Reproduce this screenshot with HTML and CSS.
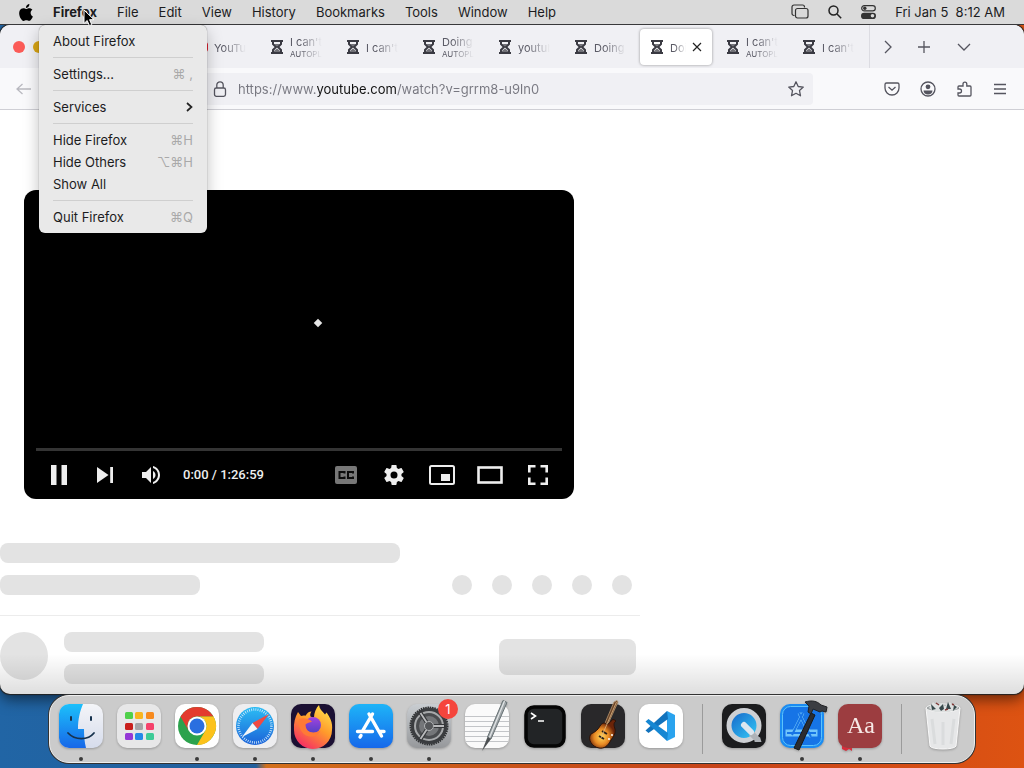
FILE: index.html
```html
<!DOCTYPE html>
<html lang="en">
<head>
    <meta charset="UTF-8">
    <meta name="viewport" content="width=device-width, initial-scale=1">
    <title>Desktop</title>
    <link rel="stylesheet" href="styles.css">
</head>
<body>
    <svg class="defs" aria-hidden="true">
        <symbol id="hourglass" viewBox="0 0 14 16">
            <path d="M1 2h12M1 14h12" stroke="#3a3a42" stroke-width="2.2"/>
            <path d="M3 2v3l3 3-3 3v3M11 2v3L8 8l3 3v3" fill="none" stroke="#3a3a42" stroke-width="2"/>
            <path d="M4.500 5h5L7 7.500zM4 13.500v-1.500l3-2.500 3 2.500v1.500z" fill="#3a3a42" opacity=".7"/>
        </symbol>
    </svg>

    <nav class="menubar">
        <button class="apple" aria-label="Apple"><svg width="14" height="17" viewBox="2 0 20 24"><path d="M12.152 6.896c-.948 0-2.415-1.078-3.96-1.040-2.040.027-3.910 1.183-4.961 3.014-2.117 3.675-.546 9.103 1.519 12.090 1.013 1.454 2.208 3.090 3.792 3.039 1.520-.065 2.090-.987 3.935-.987 1.831 0 2.350.987 3.960.948 1.637-.026 2.676-1.480 3.676-2.948 1.156-1.688 1.636-3.325 1.662-3.415-.039-.013-3.182-1.221-3.220-4.857-.026-3.040 2.480-4.494 2.597-4.559-1.429-2.090-3.623-2.324-4.390-2.376-2-.156-3.675 1.090-4.610 1.090zM15.530 3.830c.843-1.012 1.400-2.427 1.245-3.830-1.207.052-2.662.805-3.532 1.818-.780.896-1.454 2.338-1.273 3.714 1.338.104 2.715-.688 3.559-1.701"/></svg></button>
        <div class="menu-wrap">
            <button class="app-name">Firefox</button>
            <div class="menu">
                <button>About Firefox</button>
                <hr>
                <button>Settings... <kbd>⌘ ,</kbd></button>
                <hr>
                <button>Services <svg width="7" height="10" viewBox="0 0 7 10"><path d="M1 1l4.500 4L1 9" fill="none" stroke="#222" stroke-width="1.700"/></svg></button>
                <hr>
                <button>Hide Firefox <kbd>⌘H</kbd></button>
                <button>Hide Others <kbd>⌥⌘H</kbd></button>
                <button>Show All</button>
                <hr>
                <button>Quit Firefox <kbd>⌘Q</kbd></button>
            </div>
        </div>
        <button>File</button>
        <button>Edit</button>
        <button>View</button>
        <button>History</button>
        <button>Bookmarks</button>
        <button>Tools</button>
        <button>Window</button>
        <button>Help</button>
        <div class="status">
            <button aria-label="Stage manager"><svg width="18" height="16" viewBox="0 0 18 16" fill="none" stroke="#333" stroke-width="1.200"><path d="M3.500 11.500H3a2 2 0 0 1-2-2V3a2 2 0 0 1 2-2h8.500a2 2 0 0 1 2 2v.500"/><rect x="4.500" y="4.500" width="12.500" height="9.500" rx="2"/></svg></button>
            <button aria-label="Search"><svg width="14" height="14" viewBox="0 0 14 14" fill="none" stroke="#222" stroke-width="1.500"><circle cx="5.500" cy="5.500" r="4.500"/><path d="M9 9l4.200 4.200"/></svg></button>
            <button aria-label="Control centre"><svg width="15" height="14" viewBox="0 0 15 14"><rect x=".7" y=".7" width="13.600" height="5.200" rx="2.600" fill="none" stroke="#333" stroke-width="1.200"/><circle cx="3.800" cy="3.300" r="1.700" fill="#333"/><rect y="7.700" width="15" height="6.300" rx="3.100" fill="#333"/><circle cx="11.500" cy="10.800" r="1.800" fill="#dadada"/></svg></button>
            <time>Fri Jan 5&nbsp; 8:12 AM</time>
        </div>
        <svg class="cursor" width="12" height="18" viewBox="0 0 12 18"><path d="M1 1v13.500l3.200-3 2.200 5.200 2.400-1-2.200-5H11z" fill="#000" stroke="#fff"/></svg>
    </nav>

    <main class="window">
        <header class="tabstrip">
            <div class="lights">
                <button class="red" aria-label="Close"></button>
                <button class="yellow" aria-label="Minimize"></button>
                <button class="green" aria-label="Zoom"></button>
            </div>
            <div class="tabs">
                <button class="tab"><svg width="14" height="12" viewBox="0 0 14 12"><rect y="1" width="14" height="10" rx="3" fill="#e02030"/><path d="M5.500 3.500v5l4-2.500z" fill="#fff"/></svg><span>YouTube</span></button>
                <button class="tab"><svg width="14" height="16"><use href="#hourglass"/></svg><span>I can't<small>AUTOPLAY</small></span></button>
                <button class="tab"><svg width="14" height="16"><use href="#hourglass"/></svg><span>I can't</span></button>
                <button class="tab"><svg width="14" height="16"><use href="#hourglass"/></svg><span>Doing<small>AUTOPLAY</small></span></button>
                <button class="tab"><svg width="14" height="16"><use href="#hourglass"/></svg><span>youtube</span></button>
                <button class="tab"><svg width="14" height="16"><use href="#hourglass"/></svg><span>Doing</span></button>
                <button class="tab active"><svg width="14" height="16"><use href="#hourglass"/></svg><span>Doing</span><svg class="x" width="10" height="10" viewBox="0 0 10 10"><path d="M1 1l8 8M9 1L1 9" stroke="#222" stroke-width="1.200"/></svg></button>
                <button class="tab"><svg width="14" height="16"><use href="#hourglass"/></svg><span>I can't<small>AUTOPLAY</small></span></button>
                <button class="tab"><svg width="14" height="16"><use href="#hourglass"/></svg><span>I can't</span></button>
            </div>
            <div class="tab-tools">
                <button aria-label="Scroll tabs"><svg width="8" height="14" viewBox="0 0 8 14"><path d="M1 1l6 6-6 6"/></svg></button>
                <button aria-label="New tab"><svg width="12" height="12" viewBox="0 0 12 12"><path d="M6 0v12M0 6h12"/></svg></button>
                <button aria-label="List tabs"><svg width="14" height="8" viewBox="0 0 14 8"><path d="M1 1l6 6 6-6"/></svg></button>
            </div>
        </header>

        <div class="toolbar">
            <button class="back" aria-label="Back"><svg width="15" height="12" viewBox="0 0 15 12"><path d="M15 6H1M6.500 1L1 6l5.500 5"/></svg></button>
            <label class="urlbar">
                <svg width="14" height="18" viewBox="0 0 14 18"><rect x="1.500" y="8" width="11" height="8.300" rx="1.800"/><path d="M3.800 8V5a3.200 3.200 0 0 1 6.400 0v3"/></svg>
                <input type="text" aria-label="Address" value="https://www.youtube.com/watch?v=grrm8-u9ln0">
                <svg width="18" height="18" viewBox="0 0 18 18"><path d="M9 1.800l2.200 4.700 5.100.6-3.800 3.500 1 5.200L9 13.300l-4.500 2.500 1-5.200L1.700 7.100l5.100-.6z" stroke-linejoin="round"/></svg>
            </label>
            <div class="actions">
                <button aria-label="Pocket"><svg width="16" height="16" viewBox="0 0 16 16"><path d="M2.500 2h11a1.500 1.500 0 0 1 1.500 1.500V7A7 7 0 0 1 1 7V3.500A1.500 1.500 0 0 1 2.500 2zM4.500 6L8 9.200 11.500 6"/></svg></button>
                <button aria-label="Account"><svg width="16" height="16" viewBox="0 0 16 16"><circle cx="8" cy="8" r="7"/><circle cx="8" cy="5.800" r="2.400" fill="#55555f" stroke="none"/><path d="M3.500 9.500h9c0 2.400-2 4-4.500 4s-4.500-1.600-4.500-4z" fill="#55555f" stroke="none"/></svg></button>
                <button aria-label="Extensions"><svg width="16" height="16" viewBox="0 0 16 16"><path d="M2 8V6a1 1 0 0 1 1-1h4V3a1.900 1.900 0 0 1 3.800 0v2H14a1 1 0 0 1 1 1v8a1 1 0 0 1-1 1H3a1 1 0 0 1-1-1v-2h1.500a2 2 0 0 0 0-4z"/></svg></button>
                <button aria-label="Menu"><svg width="12" height="12" viewBox="0 0 12 12"><path d="M0 1.500h12M0 6h12M0 10.500h12"/></svg></button>
            </div>
        </div>

        <section class="watch">
            <div class="player">
                <i class="spinner"></i>
                <div class="progress"></div>
                <div class="controls">
                    <button aria-label="Pause"><svg width="16" height="20" viewBox="0 0 16 20"><path d="M0 0h5.500v20H0zM10.500 0H16v20h-5.500z"/></svg></button>
                    <button aria-label="Next"><svg width="16" height="16" viewBox="0 0 16 16"><path d="M0 0l11.500 8L0 16zM13.200 0H16v16h-2.800z"/></svg></button>
                    <button aria-label="Mute"><svg width="18" height="18" viewBox="0 0 18 18"><path d="M0 6h4l5-5v16l-5-5H0zM11 5c1.700.8 2.500 2.300 2.500 4s-.8 3.200-2.500 4zM11 0c4 .9 7 4.600 7 9s-3 8.100-7 9v-2.100c2.900-.9 5-3.600 5-6.900s-2.100-6-5-6.900z"/></svg></button>
                    <span class="time">0:00 / 1:26:59</span>
                    <button aria-label="Captions"><svg width="22" height="18" viewBox="0 0 22 18"><rect width="22" height="18" rx="2" fill="#777"/><path d="M9.500 7.500V6h-5v6h5v-1.500M18 7.500V6h-5v6h5v-1.500" fill="none" stroke="#0c0c0c" stroke-width="2"/></svg></button>
                    <button aria-label="Settings"><svg width="20" height="20" viewBox="2 2 20 20"><path d="M19.430 12.980c.040-.320.070-.640.070-.980s-.030-.660-.070-.980l2.110-1.650c.190-.150.240-.420.120-.640l-2-3.460c-.120-.220-.390-.300-.610-.220l-2.490 1c-.520-.400-1.080-.730-1.690-.980l-.380-2.650C14.460 2.180 14.250 2 14 2h-4c-.250 0-.460.180-.490.420l-.380 2.650c-.610.250-1.170.590-1.690.980l-2.490-1c-.230-.090-.490 0-.610.220l-2 3.460c-.130.220-.070.490.120.640l2.110 1.650c-.040.320-.070.650-.070.980s.030.660.070.980l-2.110 1.650c-.190.150-.240.420-.120.640l2 3.460c.120.220.390.300.610.220l2.490-1c.520.400 1.080.730 1.690.980l.380 2.650c.030.240.240.420.490.420h4c.250 0 .460-.180.490-.420l.380-2.650c.610-.250 1.170-.590 1.690-.980l2.490 1c.230.090.490 0 .610-.220l2-3.460c.120-.220.070-.490-.120-.640zM12 15.500A3.500 3.500 0 1 1 12 8.500a3.500 3.500 0 0 1 0 7z"/></svg></button>
                    <button aria-label="Miniplayer"><svg width="26" height="20" viewBox="0 0 26 20"><rect x="1" y="1" width="24" height="18" rx="1.500" fill="none" stroke="#eee" stroke-width="2"/><path d="M12 9h9v7h-9z"/></svg></button>
                    <button aria-label="Theater mode"><svg width="26" height="18" viewBox="0 0 26 18"><rect x="1.500" y="1.500" width="23" height="15" fill="none" stroke="#eee" stroke-width="2.600"/></svg></button>
                    <button aria-label="Full screen"><svg width="20" height="20" viewBox="0 0 20 20"><path d="M1.300 7.500V1.300h6.200M12.500 1.300h6.200v6.200M18.700 12.500v6.200h-6.200M7.500 18.700H1.300v-6.200" fill="none" stroke="#eee" stroke-width="2.600"/></svg></button>
                </div>
            </div>
            <div class="info">
                <div class="bone title"></div>
                <div class="row">
                    <div class="bone line"></div>
                    <div class="circles"><i class="bone"></i><i class="bone"></i><i class="bone"></i><i class="bone"></i><i class="bone"></i></div>
                </div>
            </div>
            <div class="owner">
                <div class="bone avatar"></div>
                <div class="lines">
                    <div class="bone line"></div>
                    <div class="bone line"></div>
                </div>
                <div class="bone subscribe"></div>
            </div>
        </section>
    </main>

    <footer class="dock">
        <button class="app running" aria-label="Finder">
            <svg viewBox="0 0 44 44"><defs><linearGradient id="fa" x2="0" y2="1"><stop stop-color="#1cc0fb"/><stop offset="1" stop-color="#1767e8"/></linearGradient><linearGradient id="fb" x2="0" y2="1"><stop stop-color="#f4f5f8"/><stop offset="1" stop-color="#d6dcec"/></linearGradient></defs><rect width="44" height="44" rx="10" fill="url(#fb)"/><path d="M10 0h14c-3 7-5 15-5 25h6c0 7 .500 13 2 19H10A10 10 0 0 1 0 34V10A10 10 0 0 1 10 0z" fill="url(#fa)"/><path d="M12 13v3M32 13v3" stroke="#17324d" stroke-width="2" stroke-linecap="round"/><path d="M9 29c7 7.500 20 7.500 26 0" fill="none" stroke="#17324d" stroke-width="1.800" stroke-linecap="round"/></svg>
        </button>
        <button class="app" aria-label="Launchpad">
            <svg viewBox="0 0 44 44"><rect width="44" height="44" rx="10" fill="#e7e7e8"/><g><rect x="8" y="8" width="8" height="7" rx="1.500" fill="#4fd04a"/><rect x="18" y="8" width="8" height="7" rx="1.500" fill="#f8b520"/><rect x="29" y="8" width="8" height="7" rx="1.500" fill="#f78a1e"/><rect x="8" y="19" width="8" height="7" rx="1.500" fill="#c9201c"/><rect x="18" y="19" width="8" height="7" rx="1.500" fill="#a5a5a7"/><rect x="29" y="19" width="8" height="7" rx="1.500" fill="#f5426c"/><rect x="8" y="29" width="8" height="7" rx="1.500" fill="#9538d6"/><rect x="18" y="29" width="8" height="7" rx="1.500" fill="#2489e8"/><rect x="29" y="29" width="8" height="7" rx="1.500" fill="#3ecb97"/></g></svg>
        </button>
        <button class="app running" aria-label="Chrome">
            <svg viewBox="0 0 44 44"><rect width="44" height="44" rx="10" fill="#fff"/><circle cx="22" cy="22" r="19" fill="#2ba24c"/><path d="M5.500 12.500A19 19 0 0 1 38.500 12.500H22a9.500 9.500 0 0 0-8.300 14.200z" fill="#e33b2e"/><path d="M38.500 12.500A19 19 0 0 1 22 41l8.300-14.300A9.500 9.500 0 0 0 22 12.500z" fill="#fcc21b"/><circle cx="22" cy="22" r="9.500" fill="#fff"/><circle cx="22" cy="22" r="7.500" fill="#2a6fe0"/></svg>
        </button>
        <button class="app running" aria-label="Safari">
            <svg viewBox="0 0 44 44"><defs><linearGradient id="sf" x2="0" y2="1"><stop stop-color="#2cbdf4"/><stop offset="1" stop-color="#1b62d8"/></linearGradient></defs><rect width="44" height="44" rx="10" fill="#eeeef0"/><circle cx="22" cy="22" r="19" fill="url(#sf)"/><circle cx="22" cy="22" r="16.500" fill="none" stroke="#d5ebfc" stroke-width="2.500" stroke-dasharray=".8 1.360"/><path d="M36 10L24.500 25 19.500 19z" fill="#f04a42"/><path d="M9 33l10.500-14 5 6z" fill="#f4f6f8"/></svg>
        </button>
        <button class="app running" aria-label="Firefox">
            <svg viewBox="0 0 44 44"><defs><linearGradient id="ff" x1=".8" y1="0" x2=".2" y2="1"><stop stop-color="#ffe14a"/><stop offset=".45" stop-color="#ff9a2b"/><stop offset="1" stop-color="#f5246a"/></linearGradient><linearGradient id="fp" x2="0" y2="1"><stop stop-color="#a243e0"/><stop offset="1" stop-color="#5340c4"/></linearGradient></defs><rect width="44" height="44" rx="10" fill="#1b1033"/><path d="M7 8l3 4c1.500-.500 3-.700 4.500-.200C16 9 18 7.500 20.500 7.500c-1.500 2-1.500 3.500-1 5 1.500.7 3 1 3.500 1C23 9 25 4 28 1c.500 4 3 6 6 9.500l1.500-2C39 13 42 19 41 26a19 19 0 0 1-38 0c-.500-7 1-13 4-18z" fill="url(#ff)"/><circle cx="22" cy="21" r="8" fill="url(#fp)"/><path d="M8 15c5-2 10 0 13 2.500-2 1.500-5 1-6.500 3 0 5 3 8 8 8 3 0 5-1 7-2-2 6-10 8-16 4C9 27 7 20 8 15z" fill="#ff7a35"/></svg>
        </button>
        <button class="app running" aria-label="App Store">
            <svg viewBox="0 0 44 44"><defs><linearGradient id="as" x2="0" y2="1"><stop stop-color="#1eb4f8"/><stop offset="1" stop-color="#1668ea"/></linearGradient></defs><rect width="44" height="44" rx="10" fill="url(#as)"/><g fill="none" stroke="#fff" stroke-width="3.400" stroke-linecap="round"><path d="M23.500 10L13.500 27M20 10l12.500 22M8.500 27.500h15M30.500 27.500h4.500M12 31.500l-1 1.500"/></g></svg>
        </button>
        <button class="app running" aria-label="System Settings">
            <svg viewBox="0 0 44 44"><defs><linearGradient id="ss" x2="0" y2="1"><stop stop-color="#c9cdd1"/><stop offset="1" stop-color="#96989b"/></linearGradient></defs><rect width="44" height="44" rx="10" fill="url(#ss)"/><circle cx="22" cy="22" r="18.500" fill="#77797c" stroke="#303234" stroke-width="2" stroke-dasharray="1.500 .800"/><circle cx="22" cy="22" r="16.500" fill="#a7a9ab" stroke="#3a3c3f" stroke-width="3"/><circle cx="22" cy="22" r="11.500" fill="#747679" stroke="#4a4c4f" stroke-width="3"/><path d="M22 22L13 8M22 22h16M22 22L13 36" stroke="#35373a" stroke-width="4"/><path d="M22 22L13.500 9M22 22h15M22 22L13.500 35" stroke="#b9babc" stroke-width="1.800"/><circle cx="22" cy="22" r="4.500" fill="#55575a" stroke="#b0b2b4"/></svg>
            <span class="badge">1</span>
        </button>
        <button class="app" aria-label="TextEdit">
            <svg viewBox="0 0 44 44"><rect width="44" height="44" rx="10" fill="#fafafa"/><path d="M0 12.500h44M0 17.500h44M0 22.500h44M0 27.500h44M0 32.500h44M1 37.500h42" stroke="#c3c5c8"/><path d="M38-3.500l4 2L26 35l-3.500-2z" fill="#9fa5a8" stroke="#667073"/><path d="M39.500-3L24.500 33.500" stroke="#e3e7e8" stroke-width="1.200"/><path d="M22.500 33l3.500 2-9 12z" fill="#4d5153"/></svg>
        </button>
        <button class="app" aria-label="Terminal">
            <svg viewBox="0 0 44 44"><rect x="3" y="3" width="38" height="39" rx="8" fill="#222426" stroke="#050505" stroke-width="3.500"/><path d="M8 9l4.500 3L8 15M15 17h6" fill="none" stroke="#fff" stroke-width="1.600"/></svg>
        </button>
        <button class="app" aria-label="GarageBand">
            <svg viewBox="0 0 44 44"><defs><radialGradient id="gb" cx=".45" cy=".6"><stop stop-color="#ffd75a"/><stop offset=".55" stop-color="#e88a24"/><stop offset="1" stop-color="#6b2408"/></radialGradient></defs><rect width="44" height="44" rx="10" fill="#29282a"/><path d="M33-2l3-1.500 1 1.500-10 22-3-1z" fill="#6b4428" stroke="#b69570" stroke-width=".8"/><path d="M10 30c4-2 7-4 9-8 2-3 5-4 6-2 1 1 4-1 6-4 1-1 3 0 4 1-3 2-2 5-1 8 1 5-2 8-4 11-3 6-7 9-12 8-7-1-12-9-8-14z" fill="url(#gb)" stroke="#2c1208"/><path d="M18 32l5 3M21 27l5 3" stroke="#2a2019" stroke-width="2"/><path d="M35.500-2L20 34" stroke="#dfb885" stroke-width=".8"/><circle cx="28" cy="35" r="1" fill="#fff"/><circle cx="31" cy="31" r="1" fill="#fff"/></svg>
        </button>
        <button class="app" aria-label="Visual Studio Code">
            <svg viewBox="0 0 44 44"><rect width="44" height="44" rx="10" fill="#fff"/><path d="M28 7l8 4v22l-8 4z" fill="#2aa3ee"/><path d="M28 7L6.500 26.500 9.500 29 29 15z" fill="#1273bd"/><path d="M28 37L6.500 17.500 9.500 15 29 29z" fill="#1687d3"/></svg>
        </button>
        <hr>
        <button class="app" aria-label="QuickTime Player">
            <svg viewBox="0 0 44 44"><defs><linearGradient id="qt" x2="1" y2="1"><stop stop-color="#135fc6"/><stop offset="1" stop-color="#37d2fa"/></linearGradient></defs><rect width="44" height="44" rx="10" fill="#1b1c1e"/><circle cx="22" cy="21.500" r="15" fill="url(#qt)" stroke="#cdd0d4" stroke-width="5"/><path d="M29 29l7 7" stroke="#aeb2b7" stroke-width="6"/><path d="M32 38l6-5 1.500 5z" fill="#aeb2b7"/><path d="M22 21l7 7" stroke="#dce6ef" stroke-width="6" stroke-linecap="round"/></svg>
        </button>
        <button class="app running" aria-label="Xcode">
            <svg viewBox="0 0 44 44"><rect width="44" height="44" rx="10" fill="#1b8cf2"/><rect x="2.500" y="2.500" width="39" height="39" rx="8" fill="#1674e6" stroke="#5cc3fb"/><path d="M23 9L12 31M19 9l12 24M7 27h29v4H7z" fill="none" stroke="#72c6fb" stroke-width="3"/><path d="M23 9L12 31M19 9l12 24M7 29h29" stroke="#1674e6" stroke-width="2"/><path d="M31 9l4 2-16 35-5-2z" fill="#2b2c30" stroke="#17181a"/><path d="M25-2c7-2 12-1 16 3l6 2-1 5-4-1-2 1-7-3-2 5-3-2 1-6z" fill="#3b3d42" stroke="#202124"/></svg>
        </button>
        <button class="app running" aria-label="Dictionary">
            <svg viewBox="0 0 44 44"><path d="M4 36h10v11l-3-2-3 2-4-2z" fill="#d52e3c"/><rect width="44" height="44" rx="10" fill="#9c3d40"/><text x="23" y="29" text-anchor="middle" font-family="Liberation Serif, serif" font-size="24" fill="#f7e9e6">Aa</text></svg>
        </button>
        <hr>
        <button class="app" aria-label="Trash">
            <svg viewBox="0 0 44 44"><path d="M5 4h34l-4 38c-1 4-25 4-26 0z" fill="#e6e7e8" stroke="#f8f8f8"/><path d="M11 15l3 25M22 18v23M33 15l-3 25" stroke="#dadcdd" stroke-width="3"/><ellipse cx="22" cy="4" rx="17" ry="4" fill="#a4a9aa" stroke="#f3f3f3"/><path d="M8 4l4-6 4 3 5-2 3 3 5-4 3 4 4-1 1 3-9 4H14z" fill="#dde0e0"/><path d="M10 0l5 5-4 1zM18 4l4-4 1 5-3 2zM27-2l3 7-5 0zM33 1l3 2-4 4z" fill="#37484b"/><path d="M15-1l3 2M24 6l3-1M31 0l2 1" stroke="#7f3a38" stroke-width="1.500"/></svg>
        </button>
    </footer>
</body>
</html>
```
FILE: styles.css
```css
*{
    box-sizing:border-box;
}
body{
    margin:0;
    min-height:100vh;
    display:flex;
    flex-direction:column;
    overflow:hidden;
    font:13px/22px Inter, "Liberation Sans", sans-serif;
    color:#1c1c1e;
    background:linear-gradient(to right, #2165a5 0, #235f9c 25%, #d2701c 26%, #c9531a 50%, #c7441a 70%, #dd5312 100%);
}
button{
    padding:0;
    border:0;
    background:none;
    font:inherit;
    color:inherit;
}
svg{
    display:block;
    flex:none;
}
hr{
    margin:0;
    border:0;
}
.defs{
    position:absolute;
    width:0;
    height:0;
}

/* menu bar */
.menubar{
    position:relative;
    z-index:2;
    display:flex;
    align-items:center;
    gap:20px;
    height:25px;
    padding:0 19px;
    background:#dadada;
    border-bottom:1px solid #38383a;
}
.app-name{
    font-weight:700;
}
.menu{
    position:absolute;
    top:25px;
    left:39px;
    width:168px;
    padding:5px 14px;
    background:#e9e9e9;
    border-radius:6px;
    box-shadow:0 0 1px rgba(0, 0, 0, 0.6), 0 6px 16px rgba(0, 0, 0, 0.25);
}
.menu button{
    display:flex;
    align-items:center;
    justify-content:space-between;
    width:100%;
    height:22px;
}
.menu hr{
    height:1px;
    margin:5px 0;
    background:#cfcfcf;
}
.menu kbd{
    font:inherit;
    color:#a9a9a9;
}
.status{
    display:flex;
    align-items:center;
    gap:19px;
    margin-left:auto;
}
.cursor{
    position:absolute;
    left:83px;
    top:9px;
}

/* browser window */
.window{
    position:relative;
    flex:1;
    margin-bottom:1px;
    overflow:hidden;
    background:#fff;
    border-radius:10px;
    box-shadow:0 0 1px 1px #222, 0 6px 14px rgba(0, 0, 0, 0.5);
}
.window::after{
    content:"";
    position:absolute;
    left:0;
    right:0;
    bottom:0;
    height:40px;
    background:linear-gradient(to bottom, transparent, rgba(0, 0, 0, 0.13));
}
.tabstrip{
    display:flex;
    align-items:center;
    height:43px;
    background:#f0f0f4;
}
.lights{
    display:flex;
    gap:8px;
    flex:none;
    width:182px;
    padding-left:13px;
}
.lights button{
    width:12px;
    height:12px;
    border-radius:50%;
}
.lights .red{
    background:#fb5b57;
}
.lights .yellow{
    background:#d9a514;
}
.lights .green{
    background:#2cbf3c;
}
.tabs{
    display:flex;
    flex:1;
    height:100%;
    max-width:688px;
    padding:4px 0 3px;
    border-right:1px solid #dcdce2;
}
.tab{
    display:flex;
    align-items:center;
    gap:6px;
    flex:none;
    width:72px;
    margin:0 2px;
    padding:0 10px;
    border-radius:4px;
    color:#5b5b66;
    font-size:11px;
    line-height:12px;
    text-align:left;
}
.tab span{
    flex:1;
    padding-top:1px;
    overflow:hidden;
    white-space:nowrap;
    -webkit-mask-image:linear-gradient(to right, #000 30%, transparent);
    mask-image:linear-gradient(to right, #000 30%, transparent);
}
.tab small{
    display:block;
    font-size:8px;
}
.active{
    background:#fff;
    box-shadow:0 0 3px rgba(0, 0, 0, 0.4);
}
.tab-tools,
.actions{
    display:flex;
}
.tab-tools button,
.actions button{
    display:flex;
    align-items:center;
    justify-content:center;
    width:36px;
    height:32px;
}
.tab-tools button:last-child{
    margin-left:4px;
}
.tab-tools svg,
.toolbar svg{
    fill:none;
    stroke:#55555f;
    stroke-width:1.3;
}
.toolbar{
    display:flex;
    align-items:center;
    height:42px;
    padding:1px 6px 0 16px;
    background:#f9f9fb;
    border-bottom:1px solid #cfcfd5;
}
.back{
    width:160px;
}
.back svg{
    stroke:#b9b9c0;
}
.urlbar{
    display:flex;
    align-items:center;
    gap:11px;
    flex:1;
    height:32px;
    padding:0 8px 0 37px;
    background:#f0f0f4;
    border-radius:4px;
}
.urlbar input{
    flex:1;
    min-width:0;
    padding:0;
    border:0;
    outline:0;
    font:inherit;
    color:#777780;
    /* darker domain in the middle of the address */
    background:linear-gradient(to right, #777780 79px, #111 79px, #111 159px, #777780 159px);
    -webkit-background-clip:text;
    background-clip:text;
    -webkit-text-fill-color:transparent;
}
.actions{
    margin-left:61px;
}

/* watch page */
.watch{
    width:62.5%;
    padding-top:80px;
}
.player{
    position:relative;
    display:flex;
    flex-direction:column;
    justify-content:flex-end;
    aspect-ratio:16 / 9;
    margin:0 66px 0 24px;
    background:#000;
    border-radius:12px;
}
.spinner{
    position:absolute;
    left:291px;
    top:130px;
    width:6px;
    height:6px;
    background:#e6e6e6;
    transform:rotate(45deg);
}
.progress{
    height:3px;
    margin:0 12px;
    background:#343434;
}
.controls{
    display:flex;
    align-items:center;
    height:48px;
    padding:0 12px;
    color:#eee;
}
.controls button{
    display:flex;
    justify-content:center;
    width:48px;
}
.controls button:nth-child(-n+3){
    width:46px;
}
.controls svg{
    fill:#eee;
}
.time{
    flex:1;
    padding-left:9px;
    font-family:Roboto, sans-serif;
    font-weight:500;
}
.bone{
    background:#e3e3e3;
    border-radius:8px;
}
.info{
    padding:44px 8px 20px 0;
    border-bottom:1px solid #ececec;
}
.title{
    width:400px;
    height:20px;
    margin-bottom:12px;
}
.row{
    display:flex;
    justify-content:space-between;
}
.line{
    width:200px;
    height:20px;
}
.circles{
    display:flex;
    gap:20px;
}
.circles i{
    width:20px;
    height:20px;
    border-radius:50%;
}
.owner{
    display:flex;
    gap:16px;
    padding:16px 4px 0 0;
}
.avatar{
    width:48px;
    height:48px;
    border-radius:50%;
}
.lines{
    display:grid;
    gap:12px;
}
.subscribe{
    width:137px;
    height:36px;
    margin:7px 0 0 auto;
}

/* dock */
.dock{
    position:relative;
    z-index:1;
    display:flex;
    align-self:center;
    gap:14px;
    height:68px;
    margin-bottom:5px;
    padding:8px 9px;
    background:#cbcbcb;
    border:1px solid #eee;
    border-radius:20px;
    box-shadow:0 0 0 1px #333;
}
.dock hr{
    width:1px;
    height:50px;
    margin:0 5px;
    background:#9b9b9b;
}
.app{
    position:relative;
    width:44px;
    height:44px;
}
.app svg{
    width:44px;
    height:44px;
    overflow:visible;
    filter:drop-shadow(0 1px 1px rgba(0, 0, 0, 0.25));
}
.running::after{
    content:"";
    position:absolute;
    left:20px;
    bottom:-13px;
    width:4px;
    height:4px;
    border-radius:50%;
    background:#3a3a3a;
}
.badge{
    position:absolute;
    top:-5px;
    right:-7px;
    width:20px;
    height:20px;
    border-radius:50%;
    background:#f5453c;
    color:#fff;
    line-height:20px;
    text-align:center;
}
```
